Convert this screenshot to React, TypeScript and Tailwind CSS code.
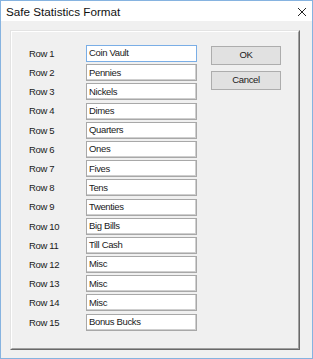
import React from "react";

const rows = [
  "Coin Vault",
  "Pennies",
  "Nickels",
  "Dimes",
  "Quarters",
  "Ones",
  "Fives",
  "Tens",
  "Twenties",
  "Big Bills",
  "Till Cash",
  "Misc",
  "Misc",
  "Misc",
  "Bonus Bucks",
];

export default function App() {
  return (
    <div
      className="w-[313px] h-[359px] border border-[#86b3e0] bg-[#f0f0f0] flex flex-col text-black"
      style={{ fontFamily: '"Liberation Sans", Arial, sans-serif' }}
    >
      <div className="h-[20px] bg-white flex items-center justify-between shrink-0">
        <span className="ml-[5px] mt-[2px] text-[11.7px] leading-[20px] text-[#111]">
          Safe Statistics Format
        </span>
        <svg width="10" height="10" viewBox="0 0 10 10" className="mr-[5px] mt-[2px]">
          <path d="M1 1 L9 9 M9 1 L1 9" stroke="#222" strokeWidth="1" fill="none" />
        </svg>
      </div>
      <div className="ml-[9px] mt-[9px] w-[290px] h-[320px] border border-t-[#e3e3e3] border-l-[#e3e3e3] border-r-[#696969] border-b-[#696969]">
        <div className="w-full h-full border border-t-white border-l-white border-r-[#a0a0a0] border-b-[#a0a0a0] flex pl-[17px] pt-[13px]">
          <div className="flex flex-col gap-y-[2.2px]">
            {rows.map((r, i) => (
              <div key={i} className="flex items-center h-[17px]">
                <span className="w-[57px] text-[9.5px] tracking-[-0.35px] text-[#1a1a1a] pt-[1px]">
                  Row {i + 1}
                </span>
                <div
                  className={
                    "w-[111px] h-[17px] bg-white flex items-center pl-[2px] text-[9.5px] tracking-[-0.35px] text-[#1a1a1a] " +
                    (i === 0
                      ? "border border-[#7aaee6]"
                      : "border border-[#a8a8a8] shadow-[inset_-1px_-1px_0_#cfcfcf]")
                  }
                >
                  {r}
                </div>
              </div>
            ))}
          </div>
          <div className="ml-[14px] mt-[1px] flex flex-col gap-[6px]">
            <button className="w-[70px] h-[19px] bg-[#e1e1e1] border border-[#adadad] text-[9.5px] tracking-[-0.35px] text-[#1a1a1a] flex items-center justify-center">
              OK
            </button>
            <button className="w-[70px] h-[19px] bg-[#e1e1e1] border border-[#adadad] text-[9.5px] tracking-[-0.35px] text-[#1a1a1a] flex items-center justify-center">
              Cancel
            </button>
          </div>
        </div>
      </div>
    </div>
  );
}
